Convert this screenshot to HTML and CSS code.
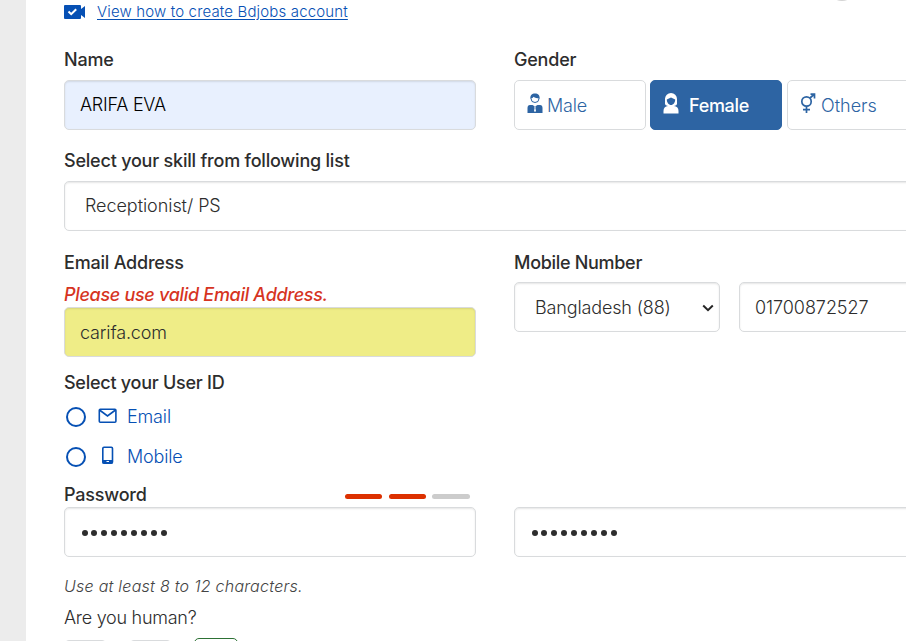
FILE: index.html
```html
<!DOCTYPE html>
<html lang="en">
<head>
<meta charset="utf-8">
<title>Create Account</title>
<link rel="stylesheet" href="styles.css">
</head>
<body>
<div class="page">
<main class="panel">
  <span class="knob"></span>
  <div class="guide">
    <svg width="21" height="14" viewBox="0 0 21 14"><path fill="#0650b4" d="M1 0h15a1 1 0 0 1 1 1v3l4-3v12l-4-3v3a1 1 0 0 1-1 1H1a1 1 0 0 1-1-1V1a1 1 0 0 1 1-1z"/><path d="M4.500 6.500l2.700 2.700 5-5" fill="none" stroke="#fff" stroke-width="2"/></svg>
    <a href="#">View how to create Bdjobs account</a>
  </div>
  <div class="columns row-name">
    <section>
      <div class="label">Name</div>
      <div class="field autofill">ARIFA EVA</div>
    </section>
    <section>
      <div class="label">Gender</div>
      <div class="genders">
        <div class="gender male"><svg width="16" height="21" viewBox="0 0 16 21"><circle cx="8" cy="5.500" r="4" fill="#fff" stroke="#2d64a3"/><path fill="#2d64a3" d="M3.500 5.500C3 2 5 .5 8 .5S13 2 12.500 5.500C10 5.500 8 5 6.500 3.800 6 4.800 5 5.500 3.500 5.500zM3 12h2.500L8 13.500 10.500 12H13q2.500 0 2.500 3v5H.5v-5q0-3 2.500-3z"/><path fill="#fff" d="M7.200 13.500h1.600l-.4 1.500.6 3L8 19l-1-1 .6-3z"/></svg><span>Male</span></div>
        <div class="gender female"><svg width="16" height="21" viewBox="0 0 16 21"><path fill="#fff" d="M2 11V6a6 6 0 0 1 12 0v5q0 1.500-3 2c3 .5 4.500 2 4.500 5v2.500H.5V18c0-3 1.500-4.500 4.500-5q-3-.5-3-2z"/><path fill="#2d64a3" d="M3.800 6.500L8 4.500l4.200 2C12.200 9.500 10.200 12 8 12S3.800 9.500 3.800 6.500z"/></svg><span>Female</span></div>
        <div class="gender others"><svg width="16" height="21" viewBox="0 0 16 21" fill="none" stroke="#2d64a3" stroke-width="1.700"><circle cx="6.500" cy="8.500" r="4.700"/><path d="M10 5l4.500-4M10.500 1.200h4V5.500M6.500 13.200V20M3 16.700h7"/></svg><span>Others</span></div>
      </div>
    </section>
  </div>
  <div class="label skill-label">Select your skill from following list</div>
  <div class="field select-text wide">Receptionist/ PS</div>
  <div class="columns row-contact">
    <section>
      <div class="label">Email Address</div>
      <div class="error">Please use valid Email Address.</div>
      <div class="field invalid">carifa.com</div>
    </section>
    <section>
      <div class="label mobile-label">Mobile Number</div>
      <div class="phones">
        <div class="field select-text country"><span>Bangladesh (88)</span><svg width="12" height="8" viewBox="0 0 12 8"><path d="M1.200 1.500L6 6.200l4.800-4.700" fill="none" stroke="#252525" stroke-width="2"/></svg></div>
        <div class="field number">01700872527</div>
      </div>
    </section>
  </div>
  <div class="label user-label">Select your User ID</div>
  <div class="choice"><i></i><svg width="20" height="20" viewBox="0 0 20 20" fill="none" stroke="#0650b4" stroke-width="1.600"><rect x="1.300" y="3.300" width="16.600" height="12.900" rx="1"/><path d="M1.500 4l8 6 8-6"/></svg><span>Email</span></div>
  <div class="choice"><i></i><svg width="20" height="20" viewBox="0 0 20 20"><rect x="4.800" y="1.300" width="9.700" height="16" rx="1.200" fill="none" stroke="#0650b4" stroke-width="1.600"/><path fill="#0650b4" d="M4.500 14h10v3.500h-10z"/><path stroke="#fff" d="M8.500 15.500H11"/></svg><span>Mobile</span></div>
  <div class="columns row-pass">
    <section>
      <div class="label pass-head"><span>Password</span><div class="meter"><b></b><b></b><b class="empty"></b></div></div>
      <div class="field dots"><b></b><b></b><b></b><b></b><b></b><b></b><b></b><b></b><b></b></div>
    </section>
    <section>
      <div class="field dots wide confirm"><b></b><b></b><b></b><b></b><b></b><b></b><b></b><b></b><b></b></div>
    </section>
  </div>
  <div class="hint">Use at least 8 to 12 characters.</div>
  <div class="human">Are you human?</div>
  <div class="tiles"><b></b><b></b><b class="picked"></b></div>
</main>
</div>
</body>
</html>
```
FILE: styles.css
```css
* { box-sizing: border-box; }
body { margin: 0; background: #ececec; font: 300 18px/24px Inter, "Liberation Sans", sans-serif; color: #2d2d2d; }
svg { display: block; flex: none; }
.page { height: 641px; overflow: hidden; padding-left: 26px; }
.panel { position: relative; height: 641px; padding-left: 38px; background: #fff; overflow: hidden; }
.knob { position: absolute; left: 804px; top: -19px; width: 24px; height: 20px; border-radius: 50%; background: #d4d4d4; }
.guide { display: flex; align-items: center; gap: 12px; height: 24px; }
.guide a { color: #0650b4; font-size: 15px; letter-spacing: .15px; text-underline-offset: 2px; }
.columns { display: grid; grid-template-columns: 412px 450px; column-gap: 38px; }
.row-name { margin-top: 24px; }
.label { height: 32px; font-weight: 540; letter-spacing: -.21px; }
.field { display: flex; align-items: center; height: 50px; padding: 0 15px; border: 1px solid #d9dbdd; border-radius: 5px; background: #fff; box-shadow: inset 0 1px 2px rgba(0,0,0,.1); white-space: nowrap; letter-spacing: -.06px; }
.autofill { background: #e8f0fe; color: #000; letter-spacing: -.25px; }
.genders { display: flex; gap: 4px; }
.gender { display: flex; flex: none; align-items: center; width: 132px; height: 50px; padding: 2px 0 0 12px; border: 1px solid #d9dbdd; border-radius: 5px; color: #2d64a3; }
.gender svg { margin-bottom: 6px; }
.male { gap: 4px; letter-spacing: -.15px; }
.others { gap: 5px; margin-left: 1px; }
.female { gap: 10px; background: #2d64a3; border-color: #2d64a3; color: #fff; font-weight: 450; letter-spacing: -.3px; }
.skill-label { margin-top: 19px; }
.select-text { padding-left: 20px; }
.wide { width: 900px; }
.row-contact { margin-top: 20px; }
.error { height: 24px; color: #d6341f; font-weight: 540; font-style: italic; letter-spacing: -.31px; }
.invalid { background: #efed87; padding-top: 2px; letter-spacing: -.15px; }
.mobile-label { height: 31px; letter-spacing: -.3px; }
.phones { display: flex; gap: 19px; }
.country { width: 206px; padding-right: 5px; padding-top: 1px; justify-content: space-between; letter-spacing: -.15px; }
.number { width: 210px; padding-top: 2px; }
.user-label { margin-top: 14px; height: 26px; letter-spacing: -.26px; }
.choice { display: flex; align-items: center; height: 40px; padding-left: 2px; color: #0650b4; letter-spacing: -.15px; }
.choice i { width: 20px; height: 20px; border: 2px solid #0650b4; border-radius: 50%; }
.choice svg { margin: 0 9px 2px 12px; }
.pass-head { display: flex; justify-content: space-between; height: 24px; padding-right: 6px; font-weight: 500; }
.row-pass { margin-top: 6px; }
.meter { display: flex; align-items: center; gap: 7px; padding-top: 3px; }
.meter b { width: 37px; height: 5px; border-radius: 3px; background: #dc3000; }
.meter .empty { width: 38px; background: #ccc; margin-left: -1px; }
.dots { gap: 3.900px; padding: 1px 0 0 16.500px; }
.dots b { width: 6px; height: 6px; border-radius: 50%; background: #2d2d2d; }
.confirm { margin-top: 24px; }
.hint { margin-top: 17px; font-size: 16px; font-style: italic; color: #444; letter-spacing: .26px; }
.human { margin-top: 8px; letter-spacing: -.27px; }
.tiles { display: flex; gap: 22px; padding-top: 8px; }
.tiles b { flex: none; width: 43px; height: 43px; border: 1px solid #d9dbdd; border-radius: 5px; margin-top: 2px; }
.tiles .picked { border-color: #2d7135; margin-top: 0; width: 44px; }
```
